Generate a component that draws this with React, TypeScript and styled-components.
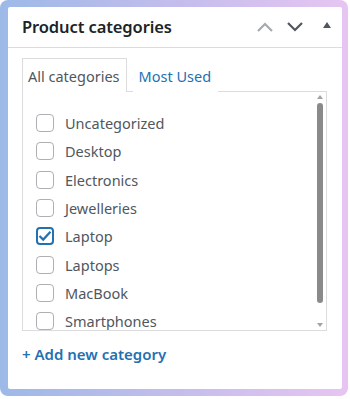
import React from 'react';
import styled, { createGlobalStyle } from 'styled-components';

const colors = {
  text: '#1d2327',
  muted: '#50575e',
  border: '#dcdcde',
  checkbox: '#8c8f94',
  blue: '#2271b1',
  link: '#2271b1',
  disabled: '#a7aaad',
};

const GlobalStyle = createGlobalStyle`
  html, body {
    margin: 0;
    padding: 0;
    background: #ffffff;
  }
  * {
    box-sizing: border-box;
  }
`;

const categories = [
  { name: 'Uncategorized', checked: false },
  { name: 'Desktop', checked: false },
  { name: 'Electronics', checked: false },
  { name: 'Jewelleries', checked: false },
  { name: 'Laptop', checked: true },
  { name: 'Laptops', checked: false },
  { name: 'MacBook', checked: false },
  { name: 'Smartphones', checked: false },
];

const App = () => {
  return (
    <>
      <GlobalStyle />
      <Frame>
        <Card>
          <Header>
            <Title>Product categories</Title>
            <HeaderActions>
              <IconButton $muted>
                <svg width="18" height="12" viewBox="0 0 18 12">
                  <path d="M2 10 L9 3 L16 10" fill="none" stroke="currentColor" strokeWidth="2.2" />
                </svg>
              </IconButton>
              <IconButton>
                <svg width="18" height="12" viewBox="0 0 18 12">
                  <path d="M2 2 L9 9 L16 2" fill="none" stroke="currentColor" strokeWidth="2.2" />
                </svg>
              </IconButton>
              <IconButton>
                <svg width="10" height="8" viewBox="0 0 10 8">
                  <path d="M1 7 L5 1 L9 7 Z" fill="currentColor" />
                </svg>
              </IconButton>
            </HeaderActions>
          </Header>
          <Body>
            <Tabs>
              <Tab $active>All categories</Tab>
              <Tab>Most Used</Tab>
            </Tabs>
            <Panel>
              <List>
                {categories.map((c) => (
                  <Row key={c.name}>
                    <Checkbox $checked={c.checked}>
                      {c.checked && (
                        <svg width="14" height="12" viewBox="0 0 14 12">
                          <path d="M1.5 6 L5.2 9.6 L12.5 1.8" fill="none" stroke={colors.blue} strokeWidth="2.2" />
                        </svg>
                      )}
                    </Checkbox>
                    <Label>{c.name}</Label>
                  </Row>
                ))}
              </List>
              <Scrollbar>
                <Arrow $dir="up" />
                <Thumb />
                <Arrow $dir="down" />
              </Scrollbar>
            </Panel>
            <AddLink>+ Add new category</AddLink>
          </Body>
        </Card>
      </Frame>
    </>
  );
};

const Frame = styled.div`
  width: 348px;
  height: 396px;
  padding: 7px 6px 7px 8px;
  border-radius: 8px;
  background: linear-gradient(90deg, #9db9e8 0%, #c3bdec 50%, #e7c5f2 100%);
`;

const Card = styled.div`
  width: 334px;
  height: 382px;
  background: #ffffff;
  border-radius: 2px;
  display: flex;
  flex-direction: column;
  font-family: 'Noto Sans', 'Open Sans', sans-serif;
`;

const Header = styled.div`
  height: 41px;
  display: flex;
  align-items: center;
  justify-content: space-between;
  padding: 0 10px 0 14px;
  border-bottom: 1px solid ${colors.border};
`;

const Title = styled.h2`
  margin: 0 0 2px 0;
  font-size: 16.5px;
  font-weight: 600;
  color: ${colors.text};
  letter-spacing: -0.1px;
`;

const HeaderActions = styled.div`
  display: flex;
  align-items: center;
  gap: 12px;
  margin-top: -1px;
`;

const IconButton = styled.span<{ $muted?: boolean }>`
  display: flex;
  align-items: center;
  justify-content: center;
  color: ${(p) => (p.$muted ? colors.disabled : colors.muted)};
  &:last-child {
    margin-left: 6px;
    margin-top: -3px;
  }
`;

const Body = styled.div`
  padding: 10px 14px 0 14px;
  display: flex;
  flex-direction: column;
`;

const Tabs = styled.div`
  display: flex;
  align-items: flex-end;
`;

const Tab = styled.div<{ $active?: boolean }>`
  height: 34px;
  display: flex;
  align-items: center;
  padding: 0 6px 0 5px;
  margin-right: 6px;
  font-size: 14.5px;
  color: ${(p) => (p.$active ? colors.muted : colors.link)};
  background: #ffffff;
  border: 1px solid ${(p) => (p.$active ? colors.border : 'transparent')};
  border-bottom: none;
  margin-bottom: -1px;
  position: relative;
  z-index: 1;
`;

const Panel = styled.div`
  width: 305px;
  height: 240px;
  border: 1px solid ${colors.border};
  display: flex;
  overflow: hidden;
`;

const List = styled.div`
  flex: 1;
  padding: 17px 0 0 13px;
  display: flex;
  flex-direction: column;
  overflow: hidden;
`;

const Row = styled.label`
  height: 28.3px;
  flex-shrink: 0;
  display: flex;
  align-items: center;
  gap: 11px;
`;

const Checkbox = styled.span<{ $checked?: boolean }>`
  width: 18px;
  height: 18px;
  border-radius: 4px;
  border: ${(p) => (p.$checked ? `2px solid ${colors.blue}` : `1px solid ${colors.checkbox}`)};
  opacity: ${(p) => (p.$checked ? 1 : 0.7)};
  display: flex;
  align-items: center;
  justify-content: center;
  flex-shrink: 0;
`;

const Label = styled.span`
  font-size: 14.5px;
  color: ${colors.muted};
`;

const Scrollbar = styled.div`
  width: 10px;
  margin-right: 1px;
  display: flex;
  flex-direction: column;
  align-items: center;
  padding: 3px 0;
`;

const Arrow = styled.span<{ $dir: 'up' | 'down' }>`
  width: 0;
  height: 0;
  border-left: 3.5px solid transparent;
  border-right: 3.5px solid transparent;
  ${(p) =>
    p.$dir === 'up'
      ? `border-bottom: 4px solid #a3a3a3; margin-bottom: 4px;`
      : `border-top: 4px solid #a3a3a3; margin-top: auto;`}
`;

const Thumb = styled.span`
  width: 6px;
  height: 200px;
  border-radius: 3px;
  background: #8a8a8a;
`;

const AddLink = styled.a`
  margin-top: 13px;
  font-size: 15px;
  font-weight: 600;
  color: ${colors.link};
  cursor: pointer;
`;

export default App;
